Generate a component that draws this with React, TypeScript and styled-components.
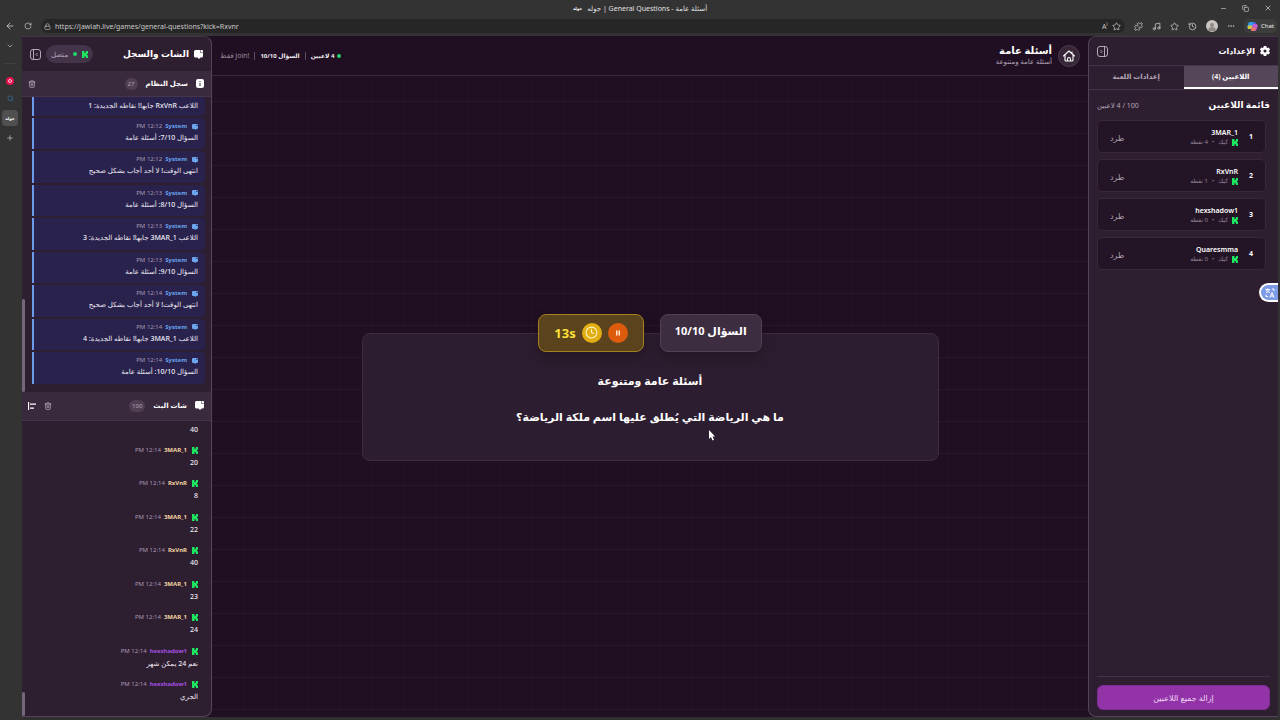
import React from "react";
import styled, { createGlobalStyle } from "styled-components";
import {
  ArrowLeft, RotateCw, Lock, Star, Minus, X, Copy, History, Ellipsis, Puzzle,
  ChevronDown, Plus, Search, Trash2, Clock, Music,
} from "lucide-react";

const Global = createGlobalStyle`
  * { box-sizing: border-box; }
  body { margin: 0; background: #333; color: #fff; font-family: "Noto Sans", "DejaVu Sans", sans-serif; }
  button, input { font: inherit; color: inherit; border: 0; margin: 0; padding: 0; background: none; }
  button { cursor: pointer; display: flex; align-items: center; justify-content: center; }
  h1, h2, h3, p, ul, ol { margin: 0; padding: 0; list-style: none; font-weight: inherit; font-size: inherit; }
  svg { display: block; flex: none; }
`;

const Window = styled.div`
  height: 100vh;
  display: flex;
  flex-direction: column;
  overflow: hidden;
`;

/* Browser chrome */
const TitleBar = styled.header`
  height: 19px;
  flex: none;
  display: grid;
  grid-template-columns: 1fr auto 1fr;
  align-items: center;
  background: #333;
  padding: 0 8px 3px;
  font-size: 7px;
  color: #e2e2e2;
`;
const PageTitle = styled.div`
  display: flex;
  align-items: center;
  gap: 5px;
`;
const Favicon = styled.span`
  font-size: 4px;
  font-weight: 700;
  color: #fff;
`;
const WindowButtons = styled.div`
  display: flex;
  justify-content: flex-end;
  gap: 15px;
  color: #ddd;
`;
const AddressRow = styled.div`
  height: 17px;
  flex: none;
  display: flex;
  align-items: center;
  gap: 9px;
  padding: 0 3px 3px 5px;
  background: #333;
  color: #c9c9c9;
`;
const AddressBar = styled.label`
  flex: 1;
  height: 14px;
  display: flex;
  align-items: center;
  gap: 4px;
  padding: 0 4px 0 3px;
  border-radius: 7px;
  background: #262626;
  font-size: 7px;
`;
const AddressInput = styled.input`
  flex: 1;
  min-width: 0;
  outline: 0;
`;
const BrowserTools = styled.div`
  display: flex;
  align-items: center;
  gap: 9px;
`;
const Avatar = styled.span`
  width: 12px;
  height: 12px;
  overflow: hidden;
  border-radius: 50%;
  background: #c9c5c1;
`;
const ChatButton = styled.button`
  gap: 3px;
  height: 14px;
  padding: 0 3px;
  border-radius: 5px;
  background: #3d3d3d;
  color: #eee;
  font-size: 6px;
`;
const Body = styled.div`
  flex: 1;
  min-height: 0;
  display: flex;
`;
const TabStrip = styled.nav`
  width: 22px;
  flex: none;
  display: flex;
  flex-direction: column;
  align-items: center;
  gap: 7px;
  padding: 5px 2px 0 0;
  background: #333;
  color: #ccc;
`;
const TabButton = styled.button<{ $active?: boolean }>`
  width: 16px;
  height: ${(p) => (p.$active ? 16 : 10)}px;
  border-radius: 4px;
  background: ${(p) => (p.$active ? "#505050" : "transparent")};
`;
const StripLine = styled.hr`
  width: 12px;
  margin: 5px 0;
  border: 0;
  border-top: 1px solid #3f3f3f;
`;

/* Application */
const AppShell = styled.div`
  flex: 1;
  min-width: 0;
  display: flex;
  background: #200f22;
  border-bottom: 3px solid #303030;
  border-right: 2px solid #333;
`;
const Panel = styled.aside<{ $side: "left" | "right" }>`
  width: 190px;
  flex: none;
  display: flex;
  flex-direction: column;
  overflow: hidden;
  background: #2d1e30;
  border: 1px solid #55435a;
  border-top-color: #443548;
  ${(p) =>
    p.$side === "right"
      ? "border-left: 0; border-radius: 0 8px 8px 0;"
      : "border-right: 0; border-radius: 8px 0 0 8px;"}
`;
const PanelHead = styled.div<{ $h: number }>`
  height: ${(p) => p.$h}px;
  flex: none;
  display: flex;
  align-items: center;
  gap: 5px;
  padding: 0 8px;
`;
const PanelTitle = styled.h2<{ $size?: number }>`
  font-size: ${(p) => p.$size || 9}px;
  line-height: 14px;
  font-weight: 700;
`;
const Spacer = styled.span`
  flex: 1;
`;
const Status = styled.span`
  display: flex;
  align-items: center;
  gap: 5px;
  height: 18px;
  padding: 0 5px;
  border-radius: 9px;
  background: #44344a;
  color: #b8a9bb;
  font-size: 7px;
`;
const Dot = styled.span`
  width: 4px;
  height: 4px;
  border-radius: 50%;
  background: #22d26a;
`;
const IconButton = styled.button`
  color: #cbbfce;
`;
const Feed = styled.section<{ $grow: number }>`
  flex: ${(p) => p.$grow} 1 0;
  min-height: 0;
  display: flex;
  flex-direction: column;
`;
const FeedHead = styled.div<{ $h: number }>`
  height: ${(p) => p.$h}px;
  flex: none;
  display: flex;
  align-items: center;
  gap: 8px;
  padding: 0 7px 0 6px;
  background: #3a2a3d;
  border-bottom: 1px solid #453548;
`;
const Count = styled.span`
  min-width: 13px;
  padding: 0 3px;
  border-radius: 6px;
  background: #503f53;
  color: #b5a6b8;
  font-size: 6px;
  line-height: 12px;
  text-align: center;
`;
const FeedBody = styled.div`
  flex: 1;
  min-height: 0;
  display: flex;
  gap: 7px;
  padding-right: 6px;
`;
const ScrollTrack = styled.span`
  width: 3px;
  display: flex;
  flex-direction: column;
  justify-content: flex-end;
`;
const ScrollThumb = styled.span<{ $h: number }>`
  height: ${(p) => p.$h}px;
  border-radius: 2px;
  background: #75677a;
`;
const Messages = styled.ul`
  flex: 1;
  min-width: 0;
  display: flex;
  flex-direction: column;
  gap: 2px;
  padding-bottom: 8px;
`;
const Message = styled.li<{ $system?: boolean; $cut?: boolean }>`
  flex: ${(p) => (p.$cut ? "0 0 19px" : "1 1 0")};
  min-height: 0;
  display: flex;
  flex-direction: column;
  gap: ${(p) => (p.$system ? 1 : 2)}px;
  padding: ${(p) => (p.$cut ? "3px" : "4px")} 7px 0;
  overflow: hidden;
  background: ${(p) => (p.$system ? "#28224d" : "transparent")};
  border-left: 2px solid ${(p) => (p.$system ? "#6a9be8" : "transparent")};
  border-radius: 0 4px 4px 0;
`;
const Meta = styled.div`
  display: flex;
  align-items: center;
  gap: 3px;
  height: 9px;
  font-size: 6px;
  line-height: 9px;
`;
const Author = styled.strong<{ $color: string }>`
  padding-right: 2px;
  color: ${(p) => p.$color};
`;
const Time = styled.time`
  color: #a89ab2;
`;
const Text = styled.p`
  font-size: 7px;
  line-height: 11px;
  font-weight: 500;
  white-space: nowrap;
  color: #efeaf4;
`;

/* Game area */
const Main = styled.main`
  flex: 1;
  min-width: 0;
  display: flex;
  flex-direction: column;
  background-color: #200f22;
  background-image:
    linear-gradient(#ffffff0a 1px, transparent 1px),
    linear-gradient(90deg, #ffffff03 1px, transparent 1px);
  background-size: 32px 32px;
  background-position: 0 1px;
`;
const GameHeader = styled.header`
  height: 40px;
  flex: none;
  display: flex;
  align-items: center;
  gap: 6px;
  padding: 0 8px;
  border-bottom: 1px solid #39293b;
  background: #200f22;
`;
const HomeButton = styled.button`
  width: 22px;
  height: 22px;
  border-radius: 50%;
  border: 1px solid #4a3a4d;
  background: #362638;
`;
const GameTitle = styled.h1`
  font-size: 10px;
  line-height: 12px;
  font-weight: 700;
`;
const GameSub = styled.p`
  font-size: 7px;
  line-height: 11px;
  color: #b3a5b6;
`;
const Stats = styled.div`
  display: flex;
  align-items: center;
  line-height: 8px;
`;
const Stat = styled.span<{ $muted?: boolean }>`
  display: flex;
  align-items: center;
  gap: 2px;
  color: ${(p) => (p.$muted ? "#9c8d9f" : "#f0eaf1")};
  font-size: ${(p) => (p.$muted ? 7 : 6)}px;
  font-weight: ${(p) => (p.$muted ? 400 : 700)};
  & + & {
    margin-right: 5px;
    padding-right: 5px;
    border-right: 1px solid #5a4a5d;
  }
`;
const Stage = styled.div`
  flex: 1;
  display: flex;
  flex-direction: column;
  align-items: center;
  justify-content: center;
  padding: 0 32px 19px;
`;
const Badges = styled.div`
  display: flex;
  gap: 16px;
  margin-bottom: -19px;
  z-index: 1;
`;
const Badge = styled.div<{ $gold?: boolean }>`
  height: 38px;
  display: flex;
  align-items: center;
  gap: 6px;
  padding: ${(p) => (p.$gold ? "0 15px" : "0 14px 4px")};
  border-radius: 8px;
  border: 1px solid ${(p) => (p.$gold ? "#a1821d" : "#524155")};
  background: ${(p) => (p.$gold ? "#5b431d" : "#3d2d40")};
  color: ${(p) => (p.$gold ? "#fce03a" : "#fff")};
  font-size: ${(p) => (p.$gold ? 13 : 11)}px;
  font-weight: 700;
  box-shadow: 0 8px 16px #0000003a;
`;
const Round = styled.span<{ $bg: string }>`
  width: 20px;
  height: 20px;
  display: flex;
  align-items: center;
  justify-content: center;
  border-radius: 50%;
  background: ${(p) => p.$bg};
  color: #fff3c4;
`;
const PauseButton = styled(Round).attrs({ as: "button" })``;
const Card = styled.section`
  width: 100%;
  max-width: 577px;
  padding: 38px 24px 34px;
  border: 1px solid #3c2c3f;
  border-radius: 8px;
  background: #2d1d30;
  text-align: center;
  font-size: 11px;
  font-weight: 700;
  line-height: 18px;
`;
const Question = styled.p`
  margin-top: 18px;
`;

/* Settings panel */
const Tabs = styled.div`
  display: flex;
  height: 25px;
  flex: none;
  border-top: 1px solid #45354a;
  border-bottom: 1px solid #45354a;
`;
const Tab = styled.button<{ $on?: boolean }>`
  flex: 1;
  font-size: 7px;
  font-weight: 600;
  color: ${(p) => (p.$on ? "#fff" : "#b3a5b6")};
  background: ${(p) => (p.$on ? "#56465a" : "transparent")};
  border-bottom: 2px solid ${(p) => (p.$on ? "#fff" : "transparent")};
`;
const ListHead = styled.div`
  height: 30px;
  flex: none;
  display: flex;
  align-items: center;
  justify-content: space-between;
  padding: 0 8px;
`;
const Small = styled.span`
  font-size: 7px;
  color: #b3a5b6;
`;
const Players = styled.ol`
  flex: 1;
  display: flex;
  flex-direction: column;
  gap: 6px;
  padding: 0 12px 0 8px;
`;
const Player = styled.li`
  height: 33px;
  display: flex;
  align-items: center;
  padding: 1px 10px 0 12px;
  border: 1px solid #382839;
  border-radius: 5px;
  background: #231526;
`;
const Rank = styled.strong`
  width: 17px;
  font-size: 7px;
  line-height: 12px;
  padding-right: 2px;
`;
const PlayerInfo = styled.div`
  flex: 1;
`;
const PlayerName = styled.div`
  font-size: 7px;
  line-height: 10px;
  font-weight: 600;
`;
const PlayerMeta = styled.div`
  display: flex;
  align-items: center;
  gap: 4px;
  font-size: 6px;
  line-height: 9px;
  color: #94869a;
`;
const Kick = styled.button`
  font-size: 8px;
  color: #b0a3b3;
`;
const PanelFoot = styled.div`
  margin: 0 8px 6px;
  padding-top: 8px;
  border-top: 1px solid #42334a;
`;
const RemoveAll = styled.button`
  width: 100%;
  height: 25px;
  border-radius: 6px;
  border: 1px solid #7e2d93;
  background: #9333a8;
  color: #f0d9f5;
  font-size: 8px;
`;
const Translate = styled.button`
  position: absolute;
  right: 2px;
  top: 283px;
  width: 19px;
  height: 19px;
  border: 2px solid #fff;
  border-right: 0;
  border-radius: 10px 0 0 10px;
  background: #7e9be8;
  color: #fff;
`;
const Pointer = styled.svg`
  position: absolute;
  left: 708px;
  top: 430px;
`;

const KickLogo = () => (
  <svg width="6" height="7" viewBox="0 0 12 14" fill="#1ee55f" aria-hidden="true">
    <path d="M0 0h5v4h2V2h1V0h4v5h-1v1h-1v2h1v1h1v5H8v-2H7v-2H5v4H0z" />
  </svg>
);
const ChatLogo = ({ size = 9, color = "#fff" }: { size?: number; color?: string }) => (
  <svg width={size} height={size} viewBox="0 0 18 18" fill={color} aria-hidden="true">
    <path d="M3 0h9v5h6v7a3 3 0 0 1-3 3h-2l-3 3-3-3H3a3 3 0 0 1-3-3V3a3 3 0 0 1 3-3z" />
    <path d="M13 0h3a2 2 0 0 1 2 2v2h-5z" />
  </svg>
);
const InfoLogo = () => (
  <svg width="8" height="9" viewBox="0 0 16 18" aria-hidden="true">
    <rect width="16" height="18" rx="4" fill="#fff" />
    <path d="M8 4v2M8 8v6" stroke="#3a2a3d" strokeWidth="2" />
  </svg>
);
const GearLogo = () => (
  <svg width="10" height="10" viewBox="0 0 20 20" aria-hidden="true">
    <path fill="#fff" d="M7.500 0h5l.7 3 1.600.9 3-.9 2.200 4.300-2.200 2v1.500l2.200 2-2.200 4.300-3-.9-1.600.9-.7 3h-5l-.7-3-1.600-.9-3 .9L0 12.800l2.200-2V9.300L0 7.300 2.200 3l3 .9 1.600-.9z" />
    <circle cx="10" cy="10" r="3" fill="#2d1e30" />
  </svg>
);
const PanelToggle = ({ flip }: { flip?: boolean }) => (
  <svg width="11" height="11" viewBox="0 0 22 22" fill="none" stroke="#c3b6c6" strokeWidth="1.800" aria-hidden="true">
    <rect x="1" y="1" width="20" height="20" rx="5" />
    {flip ? <path d="M15 1v20M7 8l3 3-3 3" /> : <path d="M7 1v20M15 8l-3 3 3 3" />}
  </svg>
);
const HomeIcon = () => (
  <svg width="12" height="12" viewBox="0 0 24 24" fill="none" stroke="#fff" strokeWidth="2.200" strokeLinecap="round" strokeLinejoin="round" aria-hidden="true">
    <path d="M1 12 12 2l11 10M4 10v10a2 2 0 0 0 2 2h12a2 2 0 0 0 2-2V10M18 4v3M9 22v-4a3 3 0 0 1 6 0v4" />
  </svg>
);
const CopilotLogo = () => (
  <svg width="11" height="11" viewBox="0 0 22 22" aria-hidden="true">
    <path d="M6 2h8l-4 14H4c-3 0-4-3-3-6l2-6c.6-1.500 1.500-2 3-2z" fill="#2f9de8" />
    <path d="M2 9h9l-2 7H4c-3 0-3-4-2-7z" fill="#d9c63b" />
    <path d="M13 2h2c2 0 3 2 3 4h-6z" fill="#4766e0" />
    <path d="M12 6h6c3 0 4 3 3 6l-2 5c-.6 2-2 3-4 3H8z" fill="#c35bd6" />
    <path d="M8 20l2-7h8l-2 6-2 1z" fill="#ee7464" />
  </svg>
);

const log: [string, string][] = [
  ["12:12 PM", "السؤال 7/10: أسئلة عامة"],
  ["12:12 PM", "انتهى الوقت! لا أحد أجاب بشكل صحيح"],
  ["12:13 PM", "السؤال 8/10: أسئلة عامة"],
  ["12:13 PM", "اللاعب 3MAR_1 جابها! نقاطه الجديدة: 3"],
  ["12:13 PM", "السؤال 9/10: أسئلة عامة"],
  ["12:14 PM", "انتهى الوقت! لا أحد أجاب بشكل صحيح"],
  ["12:14 PM", "اللاعب 3MAR_1 جابها! نقاطه الجديدة: 4"],
  ["12:14 PM", "السؤال 10/10: أسئلة عامة"],
];
const cream = "#f3d3a2";
const violet = "#a44fe0";
const chat: [string, string, string][] = [
  ["3MAR_1", cream, "20"],
  ["RxVnR", cream, "8"],
  ["3MAR_1", cream, "22"],
  ["RxVnR", cream, "40"],
  ["3MAR_1", cream, "23"],
  ["3MAR_1", cream, "24"],
  ["hexshadow1", violet, "نعم 24 يمكن شهر"],
  ["hexshadow1", violet, "الجري"],
];
const players: [string, number][] = [["3MAR_1", 4], ["RxVnR", 1], ["hexshadow1", 0], ["Quaresmma", 0]];

export default function App() {
  return (
    <Window>
      <Global />
      <TitleBar>
        <span />
        <PageTitle>
          <Favicon>جوله</Favicon>
          <span>جوله | General Questions - أسئلة عامة</span>
        </PageTitle>
        <WindowButtons>
          <button aria-label="Minimize"><Minus size={7} /></button>
          <button aria-label="Restore"><Copy size={7} /></button>
          <button aria-label="Close"><X size={8} /></button>
        </WindowButtons>
      </TitleBar>
      <AddressRow>
        <button aria-label="Back"><ArrowLeft size={10} /></button>
        <button aria-label="Reload"><RotateCw size={8} /></button>
        <AddressBar>
          <Lock size={7} />
          <AddressInput aria-label="Address" defaultValue="https://jawlah.live/games/general-questions?kick=Rxvnr" />
          <span>A⁾</span>
          <Star size={9} />
        </AddressBar>
        <BrowserTools>
          <Puzzle size={9} />
          <Music size={9} />
          <Star size={9} />
          <History size={9} />
          <Avatar>
            <svg width="12" height="12" viewBox="0 0 12 12" fill="#8e8984"><circle cx="6" cy="5" r="2" /><path d="M2 11a4 4 0 0 1 8 0z" /></svg>
          </Avatar>
          <Ellipsis size={8} />
          <ChatButton><CopilotLogo />Chat</ChatButton>
        </BrowserTools>
      </AddressRow>
      <Body>
        <TabStrip>
          <TabButton aria-label="Tabs"><ChevronDown size={8} /></TabButton>
          <StripLine />
          <TabButton aria-label="Video">
            <svg width="8" height="8" viewBox="0 0 16 16"><circle cx="8" cy="8" r="8" fill="#e5124d" /><circle cx="8" cy="8" r="3" fill="none" stroke="#fff" strokeWidth="1.500" /></svg>
          </TabButton>
          <TabButton aria-label="Search"><Search size={7} color="#2f80b5" /></TabButton>
          <TabButton $active aria-label="Game"><Favicon>جوله</Favicon></TabButton>
          <TabButton aria-label="New tab"><Plus size={8} /></TabButton>
        </TabStrip>
        <AppShell>
          <Panel $side="right" dir="rtl">
            <PanelHead $h={34}>
              <ChatLogo />
              <PanelTitle>الشات والسجل</PanelTitle>
              <Spacer />
              <Status><KickLogo /><Dot />متصل</Status>
              <IconButton aria-label="طي اللوحة"><PanelToggle /></IconButton>
            </PanelHead>
            <Feed $grow={321}>
              <FeedHead $h={26}>
                <InfoLogo />
                <PanelTitle $size={7}>سجل النظام</PanelTitle>
                <Count>27</Count>
                <Spacer />
                <IconButton aria-label="مسح السجل"><Trash2 size={8} /></IconButton>
              </FeedHead>
              <FeedBody>
                <Messages>
                  <Message $system $cut><Text>اللاعب RxVnR جابها! نقاطه الجديدة: 1</Text></Message>
                  {log.map(([time, text], i) => (
                    <Message $system key={i}>
                      <Meta><ChatLogo size={6} color="#6aa5ee" /><Author $color="#6aa5ee">System</Author><Time>{time}</Time></Meta>
                      <Text>{text}</Text>
                    </Message>
                  ))}
                </Messages>
                <ScrollTrack><ScrollThumb $h={93} /></ScrollTrack>
              </FeedBody>
            </Feed>
            <Feed $grow={325}>
              <FeedHead $h={29}>
                <ChatLogo />
                <PanelTitle $size={7}>شات البث</PanelTitle>
                <Count>100</Count>
                <Spacer />
                <IconButton aria-label="مسح الشات"><Trash2 size={8} /></IconButton>
                <IconButton aria-label="محاذاة">
                  <svg width="8" height="8" viewBox="0 0 16 16" stroke="#fff" strokeWidth="2.500"><path d="M1 0v16M4 4h12M4 12h8" /></svg>
                </IconButton>
              </FeedHead>
              <FeedBody>
                <Messages>
                  <Message $cut><Text>40</Text></Message>
                  {chat.map(([name, color, text], i) => (
                    <Message key={i}>
                      <Meta><KickLogo /><Author $color={color}>{name}</Author><Time>12:14 PM</Time></Meta>
                      <Text>{text}</Text>
                    </Message>
                  ))}
                </Messages>
                <ScrollTrack><ScrollThumb $h={24} /></ScrollTrack>
              </FeedBody>
            </Feed>
          </Panel>
          <Main dir="rtl">
            <GameHeader>
              <HomeButton aria-label="الرئيسية"><HomeIcon /></HomeButton>
              <div>
                <GameTitle>أسئلة عامة</GameTitle>
                <GameSub>أسئلة عامة ومتنوعة</GameSub>
              </div>
              <Spacer />
              <Stats>
                <Stat><Dot /><span>4 لاعبين</span></Stat>
                <Stat>السؤال 10/10</Stat>
                <Stat $muted>!join فقط</Stat>
              </Stats>
            </GameHeader>
            <Stage>
              <Badges>
                <Badge>السؤال 10/10</Badge>
                <Badge $gold>
                  <PauseButton $bg="#dc5b0d" aria-label="إيقاف مؤقت">
                    <svg width="6" height="6" viewBox="0 0 12 12" fill="#ffe7cd"><path d="M2 1h3v10H2zM7 1h3v10H7z" /></svg>
                  </PauseButton>
                  <Round $bg="#e0ae12"><Clock size={13} /></Round>
                  <span>13s</span>
                </Badge>
              </Badges>
              <Card>
                <p>أسئلة عامة ومتنوعة</p>
                <Question>ما هي الرياضة التي يُطلق عليها اسم ملكة الرياضة؟</Question>
              </Card>
            </Stage>
          </Main>
          <Panel $side="left" dir="rtl">
            <PanelHead $h={28}>
              <GearLogo />
              <PanelTitle $size={8}>الإعدادات</PanelTitle>
              <Spacer />
              <IconButton aria-label="طي الإعدادات"><PanelToggle flip /></IconButton>
            </PanelHead>
            <Tabs role="tablist">
              <Tab role="tab" aria-selected="true" $on>اللاعبين (4)</Tab>
              <Tab role="tab" aria-selected="false">إعدادات اللعبة</Tab>
            </Tabs>
            <ListHead>
              <PanelTitle>قائمة اللاعبين</PanelTitle>
              <Small>100 / 4 لاعبين</Small>
            </ListHead>
            <Players>
              {players.map(([name, points], i) => (
                <Player key={name}>
                  <Rank>{i + 1}</Rank>
                  <PlayerInfo>
                    <PlayerName>{name}</PlayerName>
                    <PlayerMeta><KickLogo /><span>كيك</span><span>•</span><span>{points} نقطة</span></PlayerMeta>
                  </PlayerInfo>
                  <Kick>طرد</Kick>
                </Player>
              ))}
            </Players>
            <PanelFoot><RemoveAll>إزالة جميع اللاعبين</RemoveAll></PanelFoot>
          </Panel>
        </AppShell>
      </Body>
      <Translate aria-label="Translate">
        <svg width="12" height="12" viewBox="0 0 24 24" fill="none" stroke="#fff" strokeWidth="2"><path d="M3 5h9M7 3v2M4 11c4-1 6-3 7-6M5 6c1 3 3 4 6 5M12 21l4-10 4 10M14 18h5M16 4h4v4M4 15v4h4" /></svg>
      </Translate>
      <Pointer width="7" height="11" viewBox="0 0 7 11" aria-hidden="true"><path d="M1 0v9l2-2 1.500 3.500 1.500-.7L4.500 6.500H7z" fill="#fff" /></Pointer>
    </Window>
  );
}
